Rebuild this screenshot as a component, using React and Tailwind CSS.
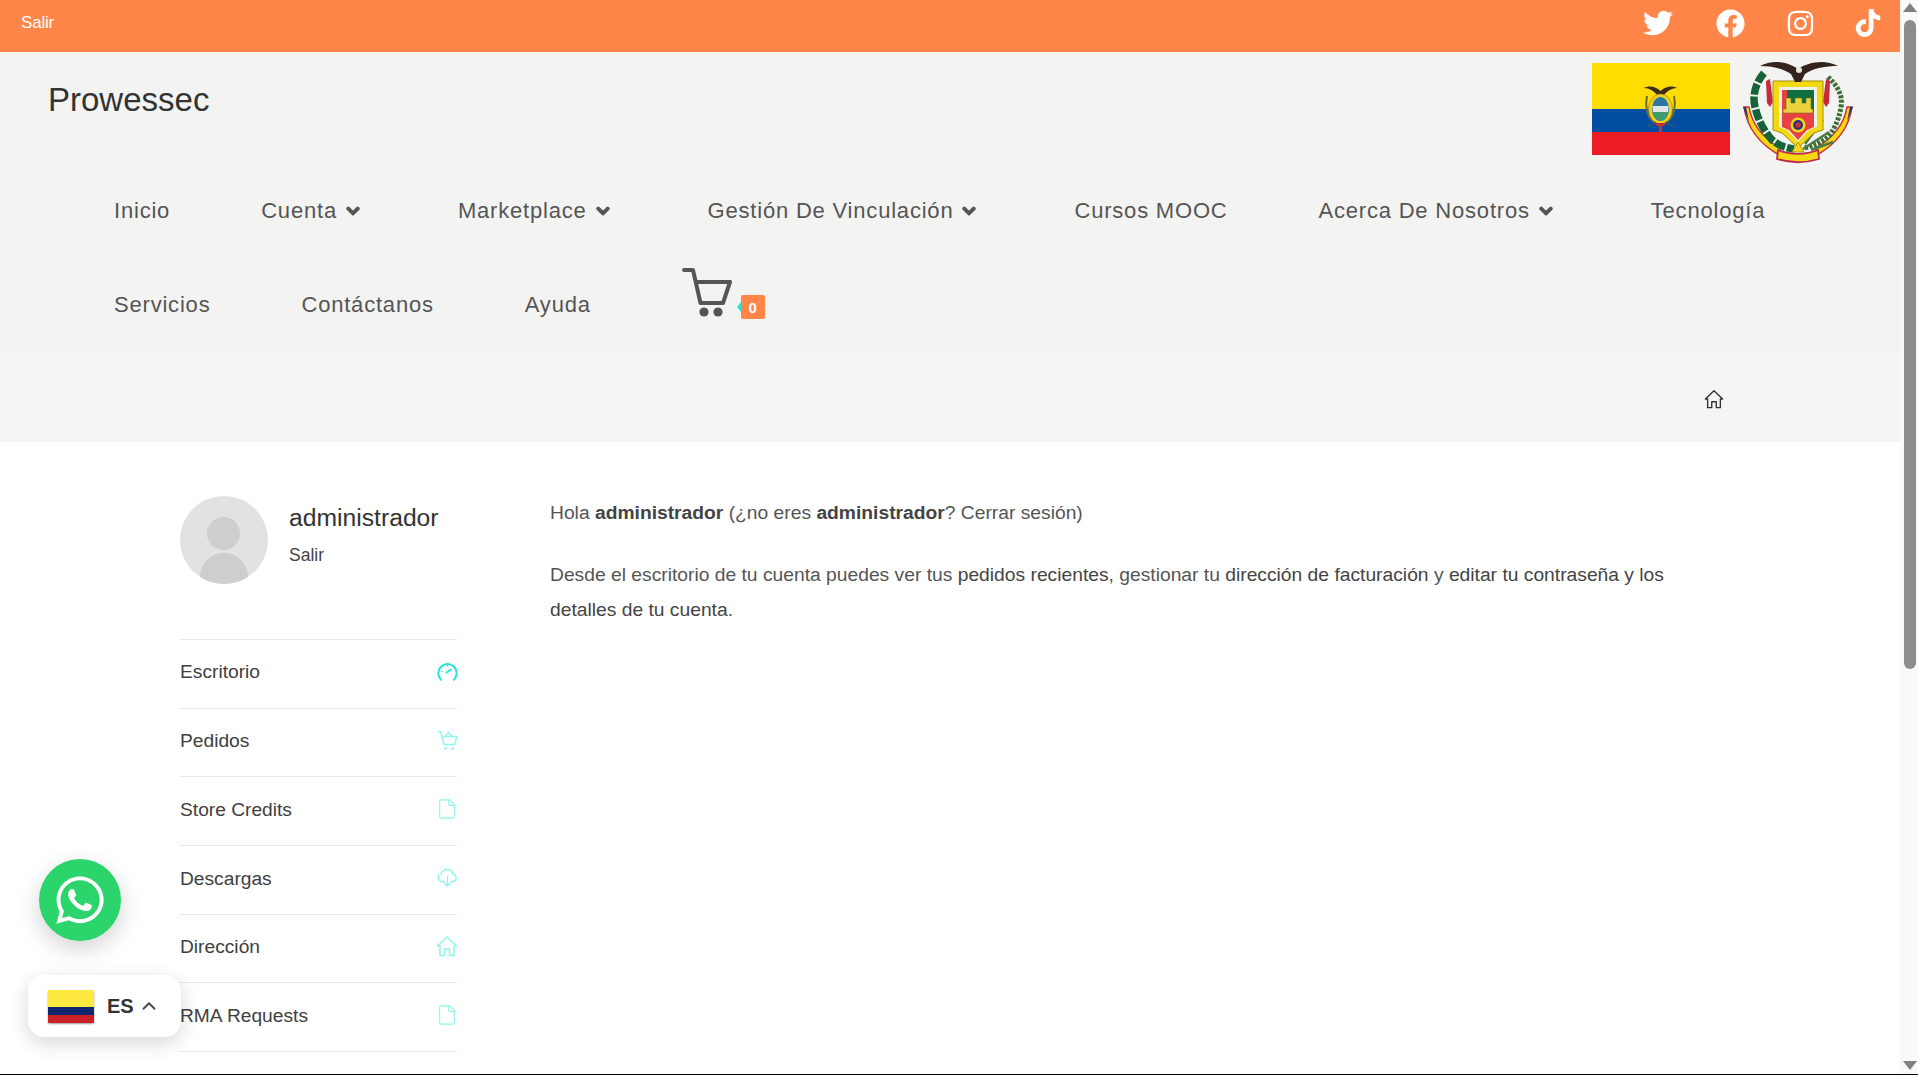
import { ChevronUp, File } from "lucide-react";
import { FaTwitter, FaFacebook, FaInstagram, FaTiktok, FaWhatsapp, FaChevronDown } from "react-icons/fa";

const FONT = "font-['Liberation_Sans',Arial,sans-serif]";

const navRows = [
  [
    { label: "Inicio" },
    { label: "Cuenta", caret: true },
    { label: "Marketplace", caret: true },
    { label: "Gestión De Vinculación", caret: true },
    { label: "Cursos MOOC" },
    { label: "Acerca De Nosotros", caret: true },
    { label: "Tecnología" },
  ],
  [{ label: "Servicios" }, { label: "Contáctanos" }, { label: "Ayuda" }],
];

const accountLinks = [
  { label: "Escritorio", icon: <GaugeIcon /> },
  { label: "Pedidos", icon: <BasketIcon /> },
  { label: "Store Credits", icon: <File size={22} strokeWidth={1.25} className="text-[#8cf5ec]" /> },
  { label: "Descargas", icon: <CloudIcon /> },
  { label: "Dirección", icon: <HouseIcon size={22} className="text-[#8cf5ec]" /> },
  { label: "RMA Requests", icon: <File size={22} strokeWidth={1.25} className="text-[#8cf5ec]" /> },
];

function GaugeIcon() {
  return (
    <svg width="21" height="21" viewBox="0 0 21 21" fill="none" stroke="#1fe8d8" strokeWidth="2" strokeLinecap="round">
      <path d="M4 18.8a9.2 9.2 0 1 1 13 0" />
      <path d="M9.5 11.5 14 8.5" />
      <path d="M4.5 10.5h.6M10.5 4.5v.5" strokeWidth="1.2" />
    </svg>
  );
}

function BasketIcon() {
  return (
    <svg width="21" height="21" viewBox="0 0 21 21" fill="none" stroke="#8cf5ec" strokeWidth="1.3" strokeLinejoin="round">
      <path d="M1 1.5h2.5L7 14.5h10.5L20 6.5H5" />
      <path d="M8 6.5 11.5 2.5 15 6.5" />
      <circle cx="8.5" cy="18.5" r="1.3" fill="#8cf5ec" stroke="none" />
      <circle cx="15.5" cy="18.5" r="1.3" fill="#8cf5ec" stroke="none" />
    </svg>
  );
}

function CloudIcon() {
  return (
    <svg width="21" height="21" viewBox="0 0 21 21" fill="none" stroke="#8cf5ec" strokeWidth="1.3" strokeLinecap="round" strokeLinejoin="round">
      <path d="M7 14.5H5a4 4 0 0 1-.6-7.9 6 6 0 0 1 11.5.4 3.8 3.8 0 0 1 .1 7.5H14" />
      <path d="M10.5 9.5v9M7.5 16l3 3 3-3" />
    </svg>
  );
}

function HouseIcon({ size, className }) {
  return (
    <svg width={size} height={size} viewBox="0 0 22 22" fill="none" stroke="currentColor" strokeWidth="1.5" strokeLinejoin="round" className={className}>
      <path d="M1.5 11 11 2l9.5 9H18v9.5h-4.5V14h-5v6.5H4V11Z" />
    </svg>
  );
}

// the big cart next to the nav items
function CartIcon() {
  return (
    <svg width="50" height="50" viewBox="0 0 50 50" fill="none" stroke="#555" strokeWidth="4" strokeLinecap="round" strokeLinejoin="round">
      <path d="M2 3h9l7.5 33h22.5L48 15H14" />
      <circle cx="22" cy="45" r="4.6" fill="#555" stroke="none" />
      <circle cx="36" cy="45" r="4.6" fill="#555" stroke="none" />
    </svg>
  );
}

function EcuadorCrest() {
  return (
    <svg width="35" height="47" viewBox="0 0 35 47">
      <path d="M17.5 6C13 1.5 6 0 1 3c5 0 10 3 13 7h7c3-4 8-7 13-7-5-3-12-1.500-16.500 3Z" fill="#3c2a1e" />
      <path d="M4 11c-2 9-1 20 7 26M31 11c2 9 1 20-7 26" fill="none" stroke="#6b6a3a" strokeWidth="2" />
      <ellipse cx="17.5" cy="24" rx="12" ry="15" fill="#f3cf17" stroke="#94832d" strokeWidth=".7" />
      <ellipse cx="17.5" cy="24" rx="8.500" ry="12" fill="#2b77a8" />
      <path d="M9.500 21h16l-.5 6h-15Z" fill="#dfe7e4" />
      <path d="M10 27h15c-1 6-4 8-7.500 9-3.500-1-6.500-3-7.500-9Z" fill="#3f9a72" />
      <path d="M4 42 13 37M31 42l-9-5" stroke="#5b5a4a" strokeWidth="1" />
      <path d="M12 38h11l-2 3h-2v6h-3v-6h-2Z" fill="#c9302c" />
    </svg>
  );
}

function UniversityCrest() {
  return (
    <svg width="114" height="104" viewBox="0 0 114 104">
      {/* banner */}
      <path d="M3 47h5c3 18 14 31 31 41l-1 7C19 84 6 68 3 47Z" fill="#f3d90f" stroke="#c92b3c" strokeWidth="1.5" />
      <path d="M111 47h-5c-3 18-14 31-31 41l1 7c19-11 32-27 35-48Z" fill="#f3d90f" stroke="#c92b3c" strokeWidth="1.5" />
      <path d="M37 90c13 5 27 5 40 0l1 9c-13 4-29 4-42 0Z" fill="#f3d90f" stroke="#c0284a" strokeWidth="1.8" />
      <path d="M2 47h3l3 14ZM112 47h-3l-3 14Z" fill="#24347e" />
      {/* laurel + palm */}
      <path d="M23 13c-8 9-12 22-9 34 3 13 9 24 17 33 6 5 13 8 22 9" fill="none" stroke="#17633a" strokeWidth="7.500" strokeDasharray="11 2" />
      <path d="M87 17c10 9 15 19 13 30-2 12-6 21-12 29-7 6-15 10-25 12" fill="none" stroke="#3f6e3a" strokeWidth="5" strokeDasharray="3 1.5" />
      <path d="M62 89l26-17M64 84l18-24M70 90l22-8" stroke="#4b7a44" strokeWidth="2.400" />
      {/* ribbons */}
      <path d="M29 19l-4 2 1 22 3 4 3-5Z" fill="#c9293f" />
      <path d="M85 19l4 2-1 22-3 4-3-5Z" fill="#c9293f" />
      {/* shield */}
      <path d="M32 21h50v49l-9 3-16 15-16-15-9-3Z" fill="#f3d90f" stroke="#a28c14" strokeWidth="1" />
      <path d="M38 27h38v40l-8 3-11 12-11-12-8-3Z" fill="#f0efe8" />
      <path d="M41 30h32v25H41Z" fill="#e64244" />
      <path d="M46 30h27v24H55L46 38Z" fill="#0f6f40" />
      <path d="M41 52h32v15l-7 3-9 10-9-10-7-3Z" fill="#e64244" />
      <path d="M42 53h30v-4h-2v-11h-5v5h-4v-5h-7v5h-4v-5h-5v11h-3Z" fill="#e9d23c" stroke="#7e6c13" strokeWidth=".6" />
      <circle cx="57" cy="65" r="7.500" fill="#f3d90f" />
      <circle cx="57" cy="65" r="5" fill="#23337f" />
      <circle cx="57" cy="65" r="2.700" fill="#d6283a" />
      {/* eagle */}
      <path d="M57 9C47 2 32-1 19 6c10 0 23 2 31 8l4 8h6l4-8c8-6 21-8 33-8C84-1 67 2 57 9Z" fill="#34241c" />
      <circle cx="58" cy="10" r="3" fill="#e8e6df" />
      <path d="M51 92h12l-6-10Z" fill="#f3d90f" stroke="#a28c14" strokeWidth=".8" />
    </svg>
  );
}

export default function App() {
  return (
    <div className={`${FONT} flex h-[1075px] overflow-hidden border-b border-black bg-white`}>
      <div className="relative min-w-0 flex-1 overflow-hidden">
        {/* top bar */}
        <div className="flex h-[52px] items-center justify-between bg-[#ff8548] pb-[6px] pl-[21px] pr-[18px] text-white">
          <a className="text-[17px] tracking-[-0.2px]">Salir</a>
          <div className="flex items-center gap-[39px]">
            <FaTwitter size={30} className="mr-[4px]" />
            <FaFacebook size={29} className="mr-[2px]" />
            <FaInstagram size={29} />
            <FaTiktok size={28} />
          </div>
        </div>

        {/* header */}
        <header className="h-[300px] bg-[#f3f3f2]">
          <div className="flex h-[116px] items-start justify-between pl-[48px] pr-[45px]">
            <div className="pt-[27px] text-[33px] leading-[42px] text-[#333]">Prowessec</div>
            <div className="flex items-start gap-[11px] pt-[8px]">
              <div className="relative mt-[3px] flex h-[92px] w-[138px] flex-col">
                <div className="h-[46px] bg-[#ffdd00]" />
                <div className="h-[23px] bg-[#034ea2]" />
                <div className="h-[23px] bg-[#ed1c24]" />
                <div className="absolute left-[51px] top-[22px]">
                  <EcuadorCrest />
                </div>
              </div>
              <UniversityCrest />
            </div>
          </div>
          <nav className="pl-[114px] text-[22px] leading-[28px] tracking-[0.8px] text-[#555]">
            <div className="flex h-[86px] items-center gap-[91px]">
              {navRows[0].map((item) => (
                <a key={item.label} className="flex items-center gap-[9px] whitespace-nowrap">
                  {item.label}
                  {item.caret && <FaChevronDown size={14} stroke="currentColor" strokeWidth={60} className="mr-[7px]" />}
                </a>
              ))}
            </div>
            <div className="flex h-[98px] items-center gap-[91px] pt-[4px]">
              {navRows[1].map((item) => (
                <a key={item.label} className="whitespace-nowrap">
                  {item.label}
                </a>
              ))}
              <div className="relative mb-[26px] h-[50px] w-[84px]">
                <CartIcon />
                <span className="absolute left-[59px] top-[28px] flex h-[24px] w-[24px] items-center justify-center rounded-[2px] bg-[#ff8548] text-[15px] font-bold leading-none tracking-normal text-white before:absolute before:-left-[4px] before:top-[7px] before:border-y-[5px] before:border-r-[4px] before:border-y-transparent before:border-r-[#1fe5d5]">
                  0
                </span>
              </div>
            </div>
          </nav>
        </header>

        {/* breadcrumb */}
        <div className="flex h-[90px] items-center justify-end bg-[#f5f5f5] pr-[176px] pt-[4px] text-[#333]">
          <HouseIcon size={20} />
        </div>

        {/* account */}
        <div className="flex pl-[180px] pt-[54px]">
          <aside className="w-[277px] shrink-0">
            <div className="flex h-[144px] items-start gap-[21px] border-b border-[#e8e8e8]">
              <div className="relative h-[88px] w-[88px] overflow-hidden rounded-full bg-[#e2e2e2]">
                <div className="absolute left-[27px] top-[21px] h-[33px] w-[33px] rounded-full bg-[#cecece]" />
                <div className="absolute left-[20px] top-[57px] h-[56px] w-[48px] rounded-t-full bg-[#cecece]" />
              </div>
              <div className="pt-[6px]">
                <div className="text-[24.7px] leading-[32px] text-[#333]">administrador</div>
                <div className="mt-[9px] text-[17.5px] leading-[24px] text-[#444]">Salir</div>
              </div>
            </div>
            {accountLinks.map((link) => (
              <div key={link.label} className="flex h-[68.7px] items-center justify-between border-b border-[#e8e8e8] pb-[2px] text-[19.2px] text-[#404040]">
                {link.label}
                <span className="-mr-[1px] pb-[3px]">{link.icon}</span>
              </div>
            ))}
          </aside>
          <main className="-mt-[1px] ml-[93px] w-[1130px] text-[19.25px] leading-[35px] text-[#555]">
            <p>
              Hola <strong className="text-[#444]">administrador</strong> (¿no eres <strong className="text-[#444]">administrador</strong>? Cerrar sesión)
            </p>
            <p className="mt-[27px]">
              Desde el escritorio de tu cuenta puedes ver tus <a className="text-[#444]">pedidos recientes</a>, gestionar tu <a className="text-[#444]">dirección de facturación</a> y <a className="text-[#444]">editar tu contraseña y los detalles de tu cuenta</a>.
            </p>
          </main>
        </div>

        {/* whatsapp button */}
        <div className="absolute left-[39px] top-[859px] flex h-[82px] w-[82px] items-center justify-center rounded-full bg-[#2bd56b] text-white shadow-[0_8px_24px_rgba(0,0,0,0.18)]">
          <FaWhatsapp size={54} />
        </div>

        {/* language picker */}
        <div className="absolute left-[28px] top-[975px] flex h-[62px] w-[153px] items-center rounded-[16px] bg-white pl-[20px] shadow-[0_6px_20px_rgba(0,0,0,0.16)]">
          <div className="flex h-[33px] w-[46px] flex-col rounded-[2px] shadow-[0_1px_2px_rgba(0,0,0,0.4)]">
            <div className="h-[17px] bg-[#fde93f]" />
            <div className="h-[8px] bg-[#10266f]" />
            <div className="h-[8px] bg-[#cc2027]" />
          </div>
          <span className="ml-[13px] text-[20px] font-bold text-[#333]">ES</span>
          <ChevronUp size={22} className="ml-[4px] text-[#444]" />
        </div>
      </div>

      {/* scrollbar */}
      <div className="flex w-[18px] shrink-0 flex-col items-end justify-between bg-[#f9f9f9] pb-[4px] pr-[1px] pt-[3px]">
        <div className="flex flex-col items-center">
          <div className="h-0 w-0 border-x-[7px] border-b-[9px] border-x-transparent border-b-[#808080]" />
          <div className="mt-[8px] h-[649px] w-[12px] rounded-full bg-[#8c8c8c]" />
        </div>
        <div className="h-0 w-0 border-x-[7px] border-t-[9px] border-x-transparent border-t-[#808080]" />
      </div>
    </div>
  );
}
